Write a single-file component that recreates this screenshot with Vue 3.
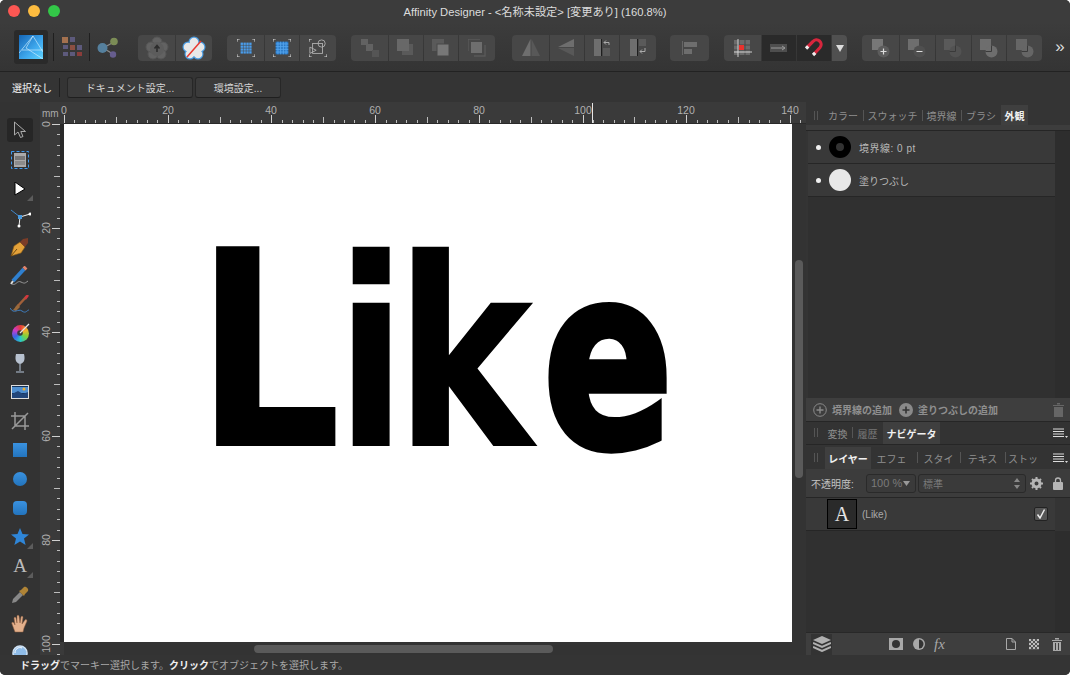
<template>
  <div class="window">
    <header class="titlebar">
      <span class="light red"></span><span class="light yellow"></span><span class="light green"></span>
      <span class="title">Affinity Designer - &lt;名称未設定&gt; [変更あり] (160.8%)</span>
    </header>

    <div class="toolbar">
      <div class="persona">
        <svg width="24" height="24" viewBox="0 0 24 24">
          <defs>
            <linearGradient id="pg" x1="0" y1="0" x2="1" y2="1"><stop offset="0" stop-color="#1565b5" /><stop offset=".6" stop-color="#3fa9ee" /><stop offset="1" stop-color="#5fd4ff" /></linearGradient>
          </defs>
          <rect width="24" height="24" fill="url(#pg)" />
          <path d="M0 18 L14 1 M14 1 L7 13 L24 24 M3 15 H24 M14 1 L24 17" fill="none" stroke="#d4f1ff" stroke-width=".9" opacity=".7" />
        </svg>
      </div>
      <i class="vsep sep1"></i>
      <svg class="pix" width="20" height="20" viewBox="0 0 20 20">
        <rect x="0" y="0" width="6" height="6" fill="#a3714f" /><rect x="8" y="0" width="5" height="5" fill="#5d5a7c" />
        <rect x="1" y="8" width="5" height="4" fill="#5d5a7c" /><rect x="8" y="8" width="5" height="5" fill="#8c4f42" /><rect x="15" y="8" width="5" height="5" fill="#5d5a7c" />
        <rect x="1" y="15" width="5" height="4" fill="#5d5a7c" /><rect x="8" y="15" width="5" height="4" fill="#5d5a7c" /><rect x="15" y="15" width="5" height="4" fill="#8a3d3b" />
      </svg>
      <i class="vsep sep2"></i>
      <svg class="share" width="22" height="22" viewBox="0 0 22 22">
        <path d="M6 11 L17 5 M6 11 L16 17" stroke="#8a8a8a" stroke-width="1.4" />
        <circle cx="5.500" cy="11" r="5" fill="#55809e" /><circle cx="17" cy="4.500" r="3.800" fill="#7b8c56" /><circle cx="16" cy="17.500" r="3.200" fill="#665d8e" />
      </svg>

      <div class="tgroup g1">
        <div class="tbtn w37">
          <svg width="24" height="24" viewBox="0 0 24 24">
            <g fill="#626262" stroke="#555"><circle cx="12" cy="6" r="5" /><circle cx="18" cy="11" r="5" /><circle cx="16" cy="18" r="5" /><circle cx="8" cy="18" r="5" /><circle cx="6" cy="11" r="5" /></g>
            <circle cx="12" cy="13" r="7" fill="#5c5c5c" />
            <path d="M12 16 V10 M9.500 12.500 L12 9.500 L14.500 12.500" stroke="#2c2c2c" stroke-width="1.600" fill="none" />
          </svg>
        </div>
        <div class="tbtn w36">
          <svg width="24" height="24" viewBox="0 0 24 24">
            <g fill="#4a9be0"><circle cx="12" cy="6" r="5.500" /><circle cx="18" cy="11" r="5.500" /><circle cx="16" cy="18" r="5.500" /><circle cx="8" cy="18" r="5.500" /><circle cx="6" cy="11" r="5.500" /></g>
            <g fill="#e8e8e8"><circle cx="12" cy="6" r="4.300" /><circle cx="18" cy="11" r="4.300" /><circle cx="16" cy="18" r="4.300" /><circle cx="8" cy="18" r="4.300" /><circle cx="6" cy="11" r="4.300" /><circle cx="12" cy="13" r="6" /></g>
            <path d="M5 21 L19 5" stroke="#e8392f" stroke-width="1.500" />
          </svg>
        </div>
      </div>

      <div class="tgroup g2">
        <div class="tbtn w37"><svg width="18" height="18" viewBox="0 0 20 20">
          <path d="M0 3V0H3 M17 0H20V3 M20 17V20H17 M3 20H0V17" fill="none" stroke="#ddd" stroke-width="1.200" />
          <g fill="#4a9dec"><rect v-for="d in grid5" :key="d.k" :x="d.x" :y="d.y" width="2.600" height="2.600" /></g>
        </svg></div>
        <div class="tbtn w34"><svg width="18" height="18" viewBox="0 0 20 20">
          <path d="M0 3V0H3 M17 0H20V3 M20 17V20H17 M3 20H0V17" fill="none" stroke="#ddd" stroke-width="1.200" />
          <rect x="3" y="3" width="14" height="14" fill="#2a78c4" />
          <path d="M3 5.500H17M3 8.500H17M3 11.500H17M3 14.500H17M5.500 3V17M8.500 3V17M11.500 3V17M14.500 3V17" stroke="#55a5ee" stroke-width="1" />
        </svg></div>
        <div class="tbtn w36"><svg width="18" height="18" viewBox="0 0 20 20" fill="none" stroke="#b0b0b0">
          <path d="M0 3V0H3 M20 17V20H17 M3 20H0V17" stroke="#ddd" stroke-width="1.200" />
          <rect x="4" y="5" width="11" height="11" /><circle cx="14" cy="5" r="4" /><path d="M1 9 L8 12.500 L1 16Z" />
        </svg></div>
      </div>

      <div class="tgroup g3">
        <div class="tbtn w37"><svg width="18" height="18" viewBox="0 0 18 18" fill="#626262"><rect x="0" y="0" width="7" height="6" /><rect x="5" y="5" width="7" height="7" /><rect x="11" y="11" width="7" height="7" fill="#555" /></svg></div>
        <div class="tbtn w34"><svg width="18" height="18" viewBox="0 0 18 18"><path d="M5 5 H16 V16 H5Z" fill="#5a5a5a" /><rect x="0" y="0" width="12" height="12" fill="#686868" /></svg></div>
        <div class="tbtn w34"><svg width="18" height="18" viewBox="0 0 18 18"><rect x="0" y="0" width="12" height="12" fill="#5a5a5a" /><rect x="5" y="5" width="12" height="12" fill="#777" stroke="#484848" /></svg></div>
        <div class="tbtn w36"><svg width="18" height="18" viewBox="0 0 18 18"><path d="M0 12V0H12 M6 17H17V6" fill="none" stroke="#5a5a5a" stroke-width="1.300" /><rect x="3" y="3" width="11" height="11" fill="#6e6e6e" /></svg></div>
      </div>

      <div class="tgroup g4">
        <div class="tbtn w37"><svg width="20" height="18" viewBox="0 0 20 18"><path d="M9.500 0V17H1Z" fill="#6e6e6e" /><path d="M10.500 0V17H19Z" fill="#585858" /></svg></div>
        <div class="tbtn w34"><svg width="18" height="18" viewBox="0 0 18 18"><path d="M16 0V8H0Z" fill="#6e6e6e" /><path d="M16 9V17L0 9Z" fill="#585858" /></svg></div>
        <div class="tbtn w34"><svg width="16" height="18" viewBox="0 0 16 18"><rect x="0" y="0" width="7" height="17" fill="#6e6e6e" /><rect x="7" y="0" width="1" height="17" fill="#1e1e1e" /><rect x="9" y="9" width="7" height="8" fill="#5a5a5a" /><path d="M15 6V3.500H10 M12 1.500L10 3.500L12 5.500" fill="none" stroke="#aaa" /></svg></div>
        <div class="tbtn w36"><svg width="16" height="18" viewBox="0 0 16 18"><rect x="0" y="0" width="7" height="17" fill="#6e6e6e" /><rect x="7" y="0" width="1" height="17" fill="#1e1e1e" /><rect x="9" y="0" width="7" height="7" fill="#5a5a5a" /><path d="M15 9V12.500H10 M12 10.500L10 12.500L12 14.500" fill="none" stroke="#aaa" /></svg></div>
      </div>

      <div class="tgroup g5">
        <div class="tbtn w39"><svg width="16" height="14" viewBox="0 0 16 14"><rect x="0" y="0" width="1" height="14" fill="#666" /><rect x="2" y="1" width="13" height="5" fill="#6e6e6e" /><rect x="2" y="8" width="8" height="5" fill="#6e6e6e" /></svg></div>
      </div>

      <div class="tgroup g6">
        <div class="tbtn w37"><svg width="18" height="18" viewBox="0 0 18 18">
          <rect x="0" y="1" width="16" height="15" fill="#6b6b6b" />
          <path d="M0 6H16M0 11H16M5 1V16M11 1V16" stroke="#484848" />
          <rect x="5" y="6" width="5" height="5" fill="#e8322d" />
          <path d="M4 0V18M0 13H18" stroke="#ddd" stroke-width=".9" />
        </svg></div>
        <div class="tbtn w34 dark"><svg width="18" height="10" viewBox="0 0 18 10"><rect x="0" y="1" width="17" height="8" fill="#4e4e4e" /><path d="M1 5H15M12 3L15 5L12 7" fill="none" stroke="#999" /></svg></div>
        <div class="tbtn w34 dark"><svg width="20" height="20" viewBox="0 0 20 20" fill="none">
          <path d="M3 9.500 L9 3.500 A4.600 4.600 0 0 1 16 9.500 L10 16" stroke="#d7263d" stroke-width="3.200" />
          <path d="M2 10.500 L4.200 8.300 M9 17 L11.200 14.800" stroke="#eee" stroke-width="3.200" />
        </svg></div>
        <div class="tbtn w16"><svg width="8" height="7" viewBox="0 0 8 7"><path d="M0 0H8L4 7Z" fill="#ddd" /></svg></div>
      </div>

      <div class="tgroup g7">
        <div v-for="(b, n) in boolBtns" :key="b.k" class="tbtn" :class="n === 0 ? 'w37' : 'w35'">
          <svg width="18" height="19" viewBox="0 0 18 19">
            <rect x="0" y="0" width="11" height="11" :fill="b.sq" />
            <circle cx="11.500" cy="12.500" r="6" :fill="b.ci" />
            <path v-if="b.k === 'add'" d="M8.500 12.500H14.500M11.500 9.500V15.500" stroke="#ddd" stroke-width="1.200" />
            <path v-if="b.k === 'sub'" d="M8.500 12.500H14.500" stroke="#ddd" stroke-width="1.200" />
            <path v-if="b.k !== 'add' && b.k !== 'sub'" :d="b.k === 'int' ? 'M5.500 12.500H11.500V6.500' : 'M11.500 6.500V12.500H5.500'" fill="none" stroke="#3a3a3a" stroke-width="1" />
          </svg>
        </div>
      </div>
      <span class="more">»</span>
    </div>

    <div class="context">
      <span class="none">選択なし</span>
      <i class="vsep csep"></i>
      <button class="cbtn doc">ドキュメント設定...</button>
      <button class="cbtn env">環境設定...</button>
    </div>

    <div class="main">
      <aside class="tools">
        <div class="tool sel"><svg width="14" height="18" viewBox="0 0 14 18"><path d="M1.500 1 L1.500 14 L5 11 L7.500 16.500 L10 15.500 L7.800 10.500 L12.500 10.500Z" fill="#2b2b2b" stroke="#aaa" /></svg></div>
        <div class="tool"><svg width="20" height="20" viewBox="0 0 20 20"><rect x="4" y="3" width="12" height="14" fill="#aaa" /><rect x="5" y="6" width="10" height="4" fill="#777" /><rect x="5" y="11" width="10" height="4" fill="#8c8c8c" /><rect x="1.500" y="1.500" width="17" height="17" fill="none" stroke="#3f9bf0" stroke-dasharray="3 2" /></svg></div>
        <div class="tool corner"><svg width="12" height="14" viewBox="0 0 12 14"><path d="M1 0 L11 7 L1 13Z" fill="#fff" stroke="#000" /></svg></div>
        <div class="tool"><svg width="22" height="20" viewBox="0 0 22 20" fill="none"><path d="M11 9 L2 2" stroke="#3f86c9" /><path d="M11 9 L21 6" stroke="#eee" /><path d="M11 9 L10 18" stroke="#eee" /><rect x="9" y="7" width="4" height="4" fill="#4a9be0" /><circle cx="21" cy="6" r="1.500" fill="#fff" /><circle cx="10" cy="18" r="1.500" fill="#fff" /></svg></div>
        <div class="tool"><svg width="20" height="20" viewBox="0 0 20 20"><path d="M1 19 L4 9 L10 5 L15 10 L11 16Z" fill="#e4a23a" stroke="#8a5a16" stroke-width=".6" /><path d="M1 19 L7 12" stroke="#6d4a12" /><path d="M10 5 L13 2 L18 1 L18 6 L15 10Z" fill="#7b3d28" /></svg></div>
        <div class="tool"><svg width="20" height="20" viewBox="0 0 20 20" fill="none"><path d="M3 15 L14 3" stroke="#2f80d0" stroke-width="4" /><path d="M14 3 L16 1" stroke="#e0846c" stroke-width="4" /><path d="M1 18 L3 15" stroke="#ddd" stroke-width="2" /><path d="M2 18 C6 20 7 14 11 16 S15 17 18 15" stroke="#999" /></svg></div>
        <div class="tool"><svg width="20" height="20" viewBox="0 0 20 20" fill="none"><path d="M6 13 L17 1" stroke="#a1603a" stroke-width="2.500" /><path d="M15 4 L18 0" stroke="#d3363e" stroke-width="2.500" /><path d="M3 15 L8 9 L10 12 L6 16Z" fill="#9a6a3c" /><path d="M0 13 C4 20 8 13 12 16 S17 15 19 15" stroke="#3f7fc0" /></svg></div>
        <div class="tool"><span class="wheel"><svg width="20" height="20" viewBox="0 0 20 20"><circle cx="8" cy="10" r="2.800" fill="#3c3c3c" /><path d="M8 10 L17 1" stroke="#e4e4e4" stroke-width="1.300" /></svg></span></div>
        <div class="tool"><svg width="12" height="20" viewBox="0 0 12 20"><path d="M2 1H10C11 5 11 10 6 11C1 10 1 5 2 1Z" fill="#b8c2d0" /><path d="M6 11V18M2 19H10" stroke="#8b95a3" stroke-width="1.500" /></svg></div>
        <div class="tool"><svg width="18" height="14" viewBox="0 0 18 14"><rect x=".500" y=".500" width="17" height="13" fill="#14335a" stroke="#ddd" /><path d="M1 2H17V8H1Z" fill="#4f8fd0" /><circle cx="13" cy="4" r="1.500" fill="#f0b030" /><path d="M1 9 L7 6 L12 9 L17 7 V13H1Z" fill="#22467a" /></svg></div>
        <div class="tool"><svg width="18" height="18" viewBox="0 0 18 18" fill="none" stroke="#999" stroke-width="1.500"><path d="M4 0V14H18 M0 4H14V18 M1 17L17 1" /></svg></div>
        <div class="tool"><span class="blue-rect"></span></div>
        <div class="tool"><span class="blue-rect round"></span></div>
        <div class="tool"><span class="blue-rect soft"></span></div>
        <div class="tool corner"><svg width="18" height="17" viewBox="0 0 18 17"><path d="M9 0 L11.500 6 L18 6.500 L13 10.500 L14.600 17 L9 13.500 L3.400 17 L5 10.500 L0 6.500 L6.500 6Z" fill="#2f86d8" /></svg></div>
        <div class="tool corner"><span class="a-tool">A</span></div>
        <div class="tool"><svg width="18" height="18" viewBox="0 0 18 18"><path d="M1 17 L2 13 L9 6 L12 9 L5 16Z" fill="#888" /><path d="M8 5 L13 10 L14 8 L17 5 C18 3 15 0 13 1 L10 4Z" fill="#b08436" /></svg></div>
        <div class="tool"><svg width="18" height="20" viewBox="0 0 18 20"><path d="M4 18 L1 10 C0 8 2 8 3 9 L4 11 L3 4 C3 3 5 3 5 4 L6 9 L6 2 C6 1 8 1 8 2 L9 9 L10 3 C10 2 12 2 12 3 L11 10 L14 6 C15 5 16 6 16 7 L13 14 L12 18Z" fill="#e3b08c" stroke="#8e5d3f" stroke-width=".5" /></svg></div>
        <div class="tool"><svg width="16" height="16" viewBox="0 0 16 16"><circle cx="8" cy="8" r="7" fill="#8fbce8" stroke="#cfe2f4" stroke-width="1.500" /><path d="M3 8 A5 5 0 0 1 10 3" stroke="#fff" fill="none" /></svg></div>
      </aside>

      <div class="workspace">
        <div class="mm">mm</div>
        <svg class="hruler" width="742" height="22" viewBox="0 0 742 22">
          <rect x="0" y="21" width="742" height="1" fill="#2a2a2a" />
          <rect v-for="t in hTicks" :key="t.v" :x="t.p" :y="21 - t.h" width="1" :height="t.h" :fill="t.v % 20 === 0 ? '#d0d0d0' : '#bdbdbd'" />
          <text v-for="t in hLabels" :key="t.v" :x="t.p" y="12" text-anchor="middle" class="rtext">{{ t.v }}</text>
          <rect x="528" y="1" width="1" height="20" fill="#e6e6e6" />
        </svg>
        <svg class="vruler" width="24" height="531" viewBox="0 0 24 531">
          <rect x="20" y="0" width="4" height="518" fill="#2a2a2a" />
          <rect v-for="t in vTicks" :key="t.v" :x="20 - t.h" :y="t.p" :width="t.h" height="1" :fill="t.v % 20 === 0 ? '#d0d0d0' : '#bdbdbd'" />
          <text v-for="t in vLabels" :key="t.v" text-anchor="middle" class="rtext" :transform="`translate(10 ${t.p}) rotate(-90)`">{{ t.v }}</text>
        </svg>
        <div class="canvas">
          <div class="art">
            <span class="g l">L</span><span class="g i">i</span><span class="g k">k</span><span class="g e">e</span>
          </div>
        </div>
        <div class="vscroll"><i></i></div>
        <div class="hscroll"><i></i></div>
      </div>

      <aside class="panels">
        <div class="tabs t1">
          <i class="grip"></i>
          <span class="tab w-color">カラー</span><span class="tab w-swatch bar">スウォッチ</span><span class="tab w-stroke bar">境界線</span><span class="tab w-brush bar">ブラシ</span><span class="tab on w-look">外観</span>
        </div>
        <div class="strip"></div>
        <div class="appearance">
          <div class="look-row">
            <i class="dot"></i><i class="swatch ring"></i><span class="wide">境界線: 0 pt</span>
          </div>
          <div class="look-row">
            <i class="dot"></i><i class="swatch fill"></i><span>塗りつぶし</span>
          </div>
        </div>
        <div class="addbar">
          <svg width="14" height="14" viewBox="0 0 14 14" fill="none" stroke="#8a8a8a"><circle cx="7" cy="7" r="6.300" /><path d="M3.500 7H10.500M7 3.500V10.500" stroke-width="1.400" /></svg>
          <b class="add1">境界線の追加</b>
          <svg width="14" height="14" viewBox="0 0 14 14"><circle cx="7" cy="7" r="7" fill="#8a8a8a" /><path d="M3.500 7H10.500M7 3.500V10.500" stroke="#333" stroke-width="1.600" /></svg>
          <b class="add2">塗りつぶしの追加</b>
          <svg class="trash" width="11" height="14" viewBox="0 0 11 14" fill="#666"><path d="M0 2H11V3H0ZM4 0H7V1.500H4ZM1 4H10V14H1Z" /></svg>
        </div>
        <div class="tabs t2">
          <i class="grip"></i>
          <span class="tab w40">変換</span><span class="tab w-hist bar dim">履歴</span><span class="tab on w-nav">ナビゲータ</span>
          <svg class="menu" width="15" height="11" viewBox="0 0 15 11"><path d="M0 1H11M0 3.500H11M0 6H11M0 8.500H11" stroke="#ddd" /><path d="M12 8H15L13.500 10Z" fill="#ddd" /></svg>
        </div>
        <div class="tabs t3">
          <i class="grip"></i>
          <span class="tab on w-layer">レイヤー</span><span class="tab w-fx">エフェ</span><span class="tab w-st bar">スタイ</span><span class="tab w-te bar">テキス</span><span class="tab w-sto bar">ストッ</span>
          <svg class="menu" width="15" height="11" viewBox="0 0 15 11"><path d="M0 1H11M0 3.500H11M0 6H11M0 8.500H11" stroke="#ddd" /><path d="M12 8H15L13.500 10Z" fill="#ddd" /></svg>
        </div>
        <div class="opacity-row">
          <span class="op-label">不透明度:</span>
          <div class="field pct"><span>100 %</span><svg width="7" height="5" viewBox="0 0 7 5"><path d="M0 0H7L3.500 5Z" fill="#999" /></svg></div>
          <div class="field blend"><span>標準</span><svg width="6" height="11" viewBox="0 0 6 11"><path d="M0 4L3 0L6 4ZM0 7L3 11L6 7Z" fill="#888" /></svg></div>
          <svg class="gear" width="13" height="13" viewBox="0 0 13 13"><circle cx="6.500" cy="6.500" r="3.500" fill="none" stroke="#b5b5b5" stroke-width="3" /><path d="M6.500 0V13M0 6.500H13M2 2L11 11M11 2L2 11" stroke="#b5b5b5" stroke-width="2" stroke-dasharray="2 9" /></svg>
          <svg class="lock" width="10" height="13" viewBox="0 0 10 13"><rect x="0" y="5" width="10" height="8" rx="1" fill="#b5b5b5" /><path d="M2.500 5V3.500A2.500 2.500 0 0 1 7.500 3.500V5" fill="none" stroke="#b5b5b5" stroke-width="1.300" /></svg>
        </div>
        <div class="layer-row">
          <div class="thumb">A</div>
          <span class="lname">(Like)</span>
          <span class="check"><svg width="10" height="10" viewBox="0 0 10 10"><path d="M1.500 5.500L4 9L8.500 0.500" fill="none" stroke="#eee" stroke-width="1.500" /></svg></span>
        </div>
        <div class="layer-empty"></div>
        <div class="bottombar">
          <span class="stack"><svg width="18" height="16" viewBox="0 0 18 16"><path d="M9 0L18 4L9 8L0 4Z" fill="#b0b0b0" /><path d="M0 7L9 11L18 7M0 11L9 15L18 11" fill="none" stroke="#b0b0b0" stroke-width="2" /></svg></span>
          <svg class="b-mask" width="14" height="12" viewBox="0 0 14 12"><rect width="14" height="12" fill="#a8a8a8" /><circle cx="7" cy="6" r="4" fill="#333" /></svg>
          <svg class="b-adj" width="12" height="12" viewBox="0 0 12 12"><circle cx="6" cy="6" r="6" fill="#a8a8a8" /><path d="M6 1.500A4.500 4.500 0 0 1 6 10.500Z" fill="#333" /></svg>
          <span class="fx">fx</span>
          <svg class="b-doc" width="10" height="12" viewBox="0 0 10 12" fill="none" stroke="#a8a8a8"><path d="M.5.500H6L9.500 4V11.500H.5Z M6 .5V4H9.500" /></svg>
          <svg class="b-check" width="10" height="11" viewBox="0 0 10 11">
            <rect width="10" height="11" fill="#555" />
            <path d="M0 0H2V2H0ZM4 0H6V2H4ZM8 0H10V2H8ZM2 2H4V4H2ZM6 2H8V4H6ZM0 4H2V6H0ZM4 4H6V6H4ZM8 4H10V6H8ZM2 6H4V8H2ZM6 6H8V8H6ZM0 8H2V10H0ZM4 8H6V10H4ZM8 8H10V10H8Z" fill="#bdbdbd" />
          </svg>
          <svg class="b-trash" width="10" height="13" viewBox="0 0 10 13" fill="#a8a8a8"><path d="M0 2H10V3H0ZM3 0H7V1.500H3ZM1 4H9V13H1Z" /><path d="M3.500 5V12M6.500 5V12" stroke="#3e3e3e" /></svg>
        </div>
      </aside>
    </div>

    <footer class="status">
      <b>ドラッグ</b>でマーキー選択します。<b>クリック</b>でオブジェクトを選択します。
    </footer>
  </div>
</template>

<script setup>
const scale = 5.186;

const hTicks = [];
for (let v = 0; v <= 142; v += 2) {
  hTicks.push({ v, p: Math.round(v * scale), h: v % 20 === 0 ? 8 : v % 10 === 0 ? 6 : 3 });
}
const hLabels = hTicks.filter((t) => t.v % 20 === 0);

const vTicks = [];
for (let v = 0; v <= 102; v += 2) {
  vTicks.push({ v, p: Math.round(v * 5.2), h: v % 20 === 0 ? 8 : v % 10 === 0 ? 6 : 3 });
}
const vLabels = vTicks.filter((t) => t.v % 20 === 0);

const grid5 = [];
for (let y = 0; y < 4; y++) {
  for (let x = 0; x < 4; x++) {
    grid5.push({ k: `${x}-${y}`, x: 4 + x * 3.2, y: 4 + y * 3.2 });
  }
}

const boolBtns = [
  { k: "add", sq: "#777", ci: "#5c5c5c" },
  { k: "sub", sq: "#6e6e6e", ci: "#4f4f4f" },
  { k: "int", sq: "#5a5a5a", ci: "#525252" },
  { k: "xor", sq: "#6e6e6e", ci: "#6e6e6e" },
  { k: "div", sq: "#666", ci: "#666" },
];
</script>

<style>
html, body { margin: 0; background: #fff; }
</style>

<style scoped>
.window {
  width: 1070px;
  height: 675px;
  display: flex;
  flex-direction: column;
  overflow: hidden;
  background: #343434;
  border-radius: 5px;
  font-family: "Liberation Sans", "Noto Sans CJK JP", sans-serif;
  color: #ccc;
}
.titlebar {
  height: 22px;
  flex-shrink: 0;
  display: flex;
  align-items: center;
  padding-left: 8px;
  gap: 8px;
  position: relative;
  background: #3c3c3c;
}
.light { width: 12px; height: 12px; border-radius: 50%; }
.red { background: #fc5753; }
.yellow { background: #fdbc40; }
.green { background: #33c748; }
.title {
  position: absolute;
  left: 0;
  right: 0;
  top: 3px;
  text-align: center;
  font-size: 11.200px;
  color: #dcdcdc;
}
.toolbar {
  height: 50px;
  flex-shrink: 0;
  display: flex;
  align-items: flex-start;
  padding: 13px 0 0 14px;
  box-sizing: border-box;
  background: linear-gradient(#3c3c3c, #343434);
  border-bottom: 1px solid #222;
}
.persona {
  width: 34px;
  height: 34px;
  margin-top: -5px;
  background: #2a2a2a;
  border-radius: 3px;
  display: flex;
  align-items: center;
  justify-content: center;
}
.vsep { display: block; width: 1px; background: #1f1f1f; }
.sep1, .sep2 { height: 28px; margin-top: -2px; }
.sep1 { margin-left: 5px; }
.pix { margin: 2px 0 0 8px; }
.sep2 { margin-left: 7px; }
.share { margin: 2px 0 0 7px; }
.tgroup {
  display: flex;
  gap: 1px;
  height: 26px;
  border-radius: 4px;
  overflow: hidden;
}
.tbtn {
  height: 26px;
  background: #474747;
  display: flex;
  align-items: center;
  justify-content: center;
  flex-shrink: 0;
}
.tbtn.dark { background: #2a2a2a; }
.w37 { width: 37px; }
.w36 { width: 36px; }
.w35 { width: 34.800px; }
.w34 { width: 34px; }
.w39 { width: 39px; }
.w16 { width: 15px; background: #505050; }
.g1 { margin-left: 19px; }
.g2 { margin-left: 15px; }
.g3 { margin-left: 15px; }
.g4 { margin-left: 17px; }
.g5 { margin-left: 14px; }
.g6 { margin-left: 15px; }
.g7 { margin-left: 15px; }
.more { margin-left: 13px; font-size: 17px; line-height: 24px; color: #ddd; }

.context {
  height: 30px;
  flex-shrink: 0;
  display: flex;
  align-items: center;
  box-sizing: border-box;
  padding-left: 12px;
  font-size: 10px;
  background: #343434;
}
.none { width: 41px; color: #ddd; font-weight: 500; white-space: nowrap; }
.csep { height: 19px; margin-left: 6px; }
.cbtn {
  height: 21px;
  padding: 0;
  font: inherit;
  color: #d4d4d4;
  background: #3b3b3b;
  border: 1px solid #272727;
  border-bottom-color: #1f1f1f;
  border-radius: 3px;
}
.doc { width: 126px; margin-left: 7px; }
.env { width: 86px; margin-left: 2px; }

.main { flex: 1; min-height: 0; display: flex; }
.tools {
  width: 40px;
  flex-shrink: 0;
  padding-top: 16px;
  box-sizing: border-box;
  overflow: hidden;
  background: #333;
}
.tool {
  position: relative;
  height: 29px;
  display: flex;
  align-items: center;
  justify-content: center;
}
.tool.sel { background: #262626; width: 26px; height: 24px; margin: 0 7px 3px; border-radius: 3px; padding: 0; }
.tool.corner::after {
  content: "";
  position: absolute;
  right: 7px;
  bottom: 2px;
  border-style: solid;
  border-width: 0 0 6px 6px;
  border-color: transparent transparent #5c5c5c transparent;
}
.wheel {
  position: relative;
  width: 17px;
  height: 17px;
  border-radius: 50%;
  background: conic-gradient(#e63a3a, #f0b428, #7cd23c, #28c8c8, #3a64e6, #c83ccc, #e63a3a);
}
.wheel svg { position: absolute; left: 0; top: -2px; }
.blue-rect {
  width: 14px;
  height: 14px;
  background: linear-gradient(#3a92e0, #2374bd);
}
.blue-rect.round { border-radius: 50%; }
.blue-rect.soft { border-radius: 4px; }
.a-tool { font-family: "Liberation Serif", serif; font-size: 19px; color: #bbb; }

.workspace {
  width: 766px;
  flex-shrink: 0;
  display: grid;
  grid-template-columns: 24px 728px 14px;
  grid-template-rows: 22px 518px 13px;
  background: #333;
}
.mm { font-size: 10px; color: #aaa; padding: 6px 0 0 2px; background: #3a3a3a; }
.hruler { grid-column: 2 / 4; display: block; background: #3a3a3a; overflow: visible; }
.vruler { grid-row: 2 / 4; display: block; background: #3a3a3a; overflow: visible; }
.rtext { font-size: 10.500px; fill: #b0b0b0; font-family: "Liberation Sans", sans-serif; }
.canvas { background: #fff; position: relative; overflow: hidden; }
.art { position: absolute; inset: 0; color: #000; font-family: "DejaVu Sans", sans-serif; font-weight: 700; font-size: 274px; line-height: 1; }
.g { position: absolute; top: 91px; transform-origin: 0 232px; }
.l { left: 131px; transform: scaleX(0.84); }
.i { left: 271px; transform: scale(0.77, 0.957); }
.k { left: 331px; transform: scale(0.76, 0.957); }
.e { left: 479px; transform: scale(0.7, 0.92); -webkit-text-stroke: 8px #000; }
.vscroll { grid-column: 3; grid-row: 2; }
.vscroll i { display: block; width: 8px; height: 218px; margin: 136px 0 0 3px; border-radius: 4px; background: #5a5a5a; }
.hscroll { grid-column: 2; grid-row: 3; }
.hscroll i { display: block; width: 299px; height: 8px; margin: 3px 0 0 190px; border-radius: 4px; background: #5a5a5a; }

.panels {
  width: 264px;
  flex-shrink: 0;
  display: flex;
  flex-direction: column;
  background: #343434;
  font-size: 10px;
  overflow: hidden;
}
.tabs {
  position: relative;
  display: flex;
  align-items: stretch;
  flex-shrink: 0;
  color: #8f8f8f;
}
.grip { position: absolute; left: 8px; top: 6px; width: 2px; height: 9px; border-left: 1px solid #555; border-right: 1px solid #555; }
.tab { display: flex; align-items: center; justify-content: center; position: relative; }
.tab.bar::before { content: ""; position: absolute; left: 0; top: 5px; height: 11px; width: 1px; background: #555; }
.tab.on { background: #3f3f3f; color: #f0f0f0; font-weight: 700; }
.tab.dim { color: #777; }
.t1 { height: 20px; padding-left: 17px; margin-top: 3px; }
.w-color { width: 40px; }
.w-swatch { width: 59px; }
.w-stroke { width: 39px; }
.w-brush { width: 40px; }
.w-look { width: 27px; }
.strip { height: 6px; box-sizing: border-box; flex-shrink: 0; background: #3d3d3d; border-bottom: 1px solid #252525; }
.appearance { flex: 1; min-height: 0; background: linear-gradient(90deg, #303030 247px, #2d2d2d 247px); margin-left: 2px; }
.look-row {
  height: 33px;
  box-sizing: border-box;
  width: 247px;
  display: flex;
  align-items: center;
  background: #393939;
  border-bottom: 1px solid #262626;
  color: #b8b8b8;
}
.wide { letter-spacing: .5px; }
.dot { width: 5px; height: 5px; border-radius: 50%; background: #f0f0f0; margin-left: 8px; }
.swatch { width: 22px; height: 22px; border-radius: 50%; margin: 0 8px 0 8px; box-sizing: border-box; }
.ring { border: 7px solid #000; background: #333; }
.fill { background: #e8e8e8; }
.addbar {
  height: 24px;
  flex-shrink: 0;
  display: flex;
  align-items: center;
  padding-left: 7px;
  box-sizing: border-box;
  background: #3e3e3e;
  border-bottom: 1px solid #262626;
  color: #8f8f8f;
}
.addbar b { font-weight: 700; }
.add1 { margin: 0 7px 0 5px; }
.add2 { margin-left: 5px; }
.trash { margin-left: auto; margin-right: 6px; }
.t2 { height: 23px; padding-left: 17px; background: #333; border-bottom: 1px solid #262626; box-sizing: border-box; }
.w40 { width: 29px; }
.w-hist { width: 31px; }
.w-nav { width: 57px; background: #3c3c3c; }
.menu { position: absolute; right: 2px; top: 6px; }
.t3 { height: 22px; padding-left: 19px; margin-top: 2px; background: #333; }
.w-layer { width: 46px; }
.w-fx { width: 41px; margin-right: 5px; }
.w-st { width: 43px; }
.w-te { width: 45px; }
.w-sto { width: 36px; }
.opacity-row {
  height: 29px;
  flex-shrink: 0;
  box-sizing: border-box;
  display: flex;
  align-items: center;
  padding-left: 5px;
  background: #3c3c3c;
  border-bottom: 1px solid #262626;
}
.op-label { width: 55px; color: #c4c4c4; }
.field {
  height: 19px;
  box-sizing: border-box;
  background: #3a3a3a;
  border: 1px solid #2a2a2a;
  border-radius: 3px;
  color: #7a7a7a;
  display: flex;
  align-items: center;
  justify-content: space-between;
  padding: 0 5px 0 4px;
}
.pct { width: 50px; font-size: 11px; }
.blend { width: 108px; margin-left: 2px; padding-left: 4px; }
.gear { margin-left: 4px; }
.lock { margin-left: 10px; }
.layer-row {
  height: 33px;
  flex-shrink: 0;
  width: 249px;
  box-sizing: border-box;
  display: flex;
  align-items: center;
  padding-left: 21px;
  background: #393939;
  border-bottom: 1px solid #262626;
}
.thumb {
  width: 30px;
  height: 30px;
  box-sizing: border-box;
  border: 1px solid #000;
  background: #2a2a2a;
  color: #e4e4e4;
  font-family: "Liberation Serif", serif;
  font-size: 20px;
  display: flex;
  align-items: center;
  justify-content: center;
}
.lname { margin-left: 5px; color: #aaa; }
.check {
  margin-left: auto;
  margin-right: 7px;
  width: 14px;
  height: 14px;
  box-sizing: border-box;
  background: #555;
  border: 1px solid #222;
  border-radius: 2px;
  display: flex;
  align-items: center;
  justify-content: center;
}
.layer-empty { height: 101px; flex-shrink: 0; background: linear-gradient(90deg, #303030 249px, #2d2d2d 249px); }
.bottombar {
  height: 22px;
  flex-shrink: 0;
  position: relative;
  display: flex;
  align-items: center;
  background: #3e3e3e;
  border-top: 1px solid #282828;
}
.stack { width: 21px; height: 21px; margin-left: 5px; background: #333; display: flex; align-items: center; justify-content: center; }
.b-mask { margin-left: 57px; }
.b-adj { margin-left: 10px; }
.fx { margin-left: 9px; font-family: "Liberation Serif", serif; font-style: italic; font-size: 15px; color: #a8a8a8; line-height: 1; }
.b-doc { margin-left: 61px; }
.b-check { margin-left: 13px; }
.b-trash { margin-left: 13px; }

.status {
  height: 20px;
  flex-shrink: 0;
  box-sizing: border-box;
  padding: 3px 0 0 20px;
  font-size: 10px;
  line-height: 15px;
  color: #a8a8a8;
  background: #343434;
}
.status b { color: #f0f0f0; }
</style>
